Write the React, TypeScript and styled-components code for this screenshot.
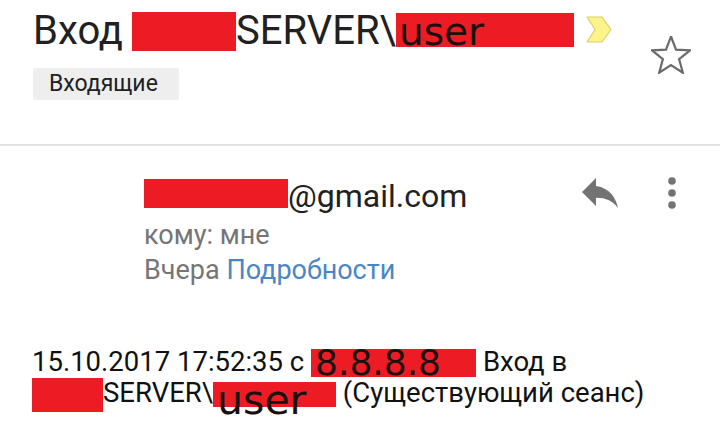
import React from "react";
import styled, { createGlobalStyle } from "styled-components";

const Global = createGlobalStyle`
  html, body { margin: 0; padding: 0; background: #ffffff; }
  * { box-sizing: border-box; }
`;

const Page = styled.div`
  width: 720px;
  height: 423px;
  overflow: hidden;
  background: #ffffff;
  font-family: Roboto, "Noto Sans", sans-serif;
  color: #212121;
`;

const Header = styled.header`
  height: 144px;
  display: flex;
  justify-content: space-between;
  padding: 0 29px 0 33px;
`;

const HeaderMain = styled.div`
  display: flex;
  flex-direction: column;
  align-items: flex-start;
`;

const TitleRow = styled.h1`
  margin: 0;
  height: 52px;
  display: flex;
  align-items: flex-start;
  font-size: 40px;
  font-weight: 400;
  line-height: 40px;
  white-space: nowrap;
`;

const TitleWord = styled.span<{ $top: number }>`
  margin-top: ${(p) => p.$top}px;
`;

const Redact = styled.span<{ $w: number; $h: number; $top?: number; $left?: number }>`
  display: inline-block;
  flex-shrink: 0;
  width: ${(p) => p.$w}px;
  height: ${(p) => p.$h}px;
  margin-top: ${(p) => p.$top ?? 0}px;
  margin-left: ${(p) => p.$left ?? 0}px;
  background: #ed1c24;
`;

/* A redaction whose red band is shorter than the handwritten text laid on it */
const RedactBand = styled.span<{ $w: number; $band: number; $top?: number }>`
  display: inline-block;
  flex-shrink: 0;
  width: ${(p) => p.$w}px;
  margin-top: ${(p) => p.$top ?? 0}px;
  background: linear-gradient(#ed1c24, #ed1c24) top left / 100% ${(p) => p.$band}px no-repeat;
`;

const RedactText = styled.span<{ $size: number; $lh: number; $pl: number }>`
  display: block;
  font-family: "DejaVu Sans", sans-serif;
  font-size: ${(p) => p.$size}px;
  line-height: ${(p) => p.$lh}px;
  color: #1a1010;
  padding-left: ${(p) => p.$pl}px;
  white-space: nowrap;
`;

const Marker = styled.svg`
  flex-shrink: 0;
  margin-top: 16px;
  margin-left: 12px;
`;

const Chip = styled.span`
  margin-top: 16px;
  width: 146px;
  height: 32px;
  padding-left: 16px;
  background: #eeeeee;
  border-radius: 2px;
  font-size: 23px;
  line-height: 32px;
  color: #212121;
`;

const StarButton = styled.svg`
  margin-top: 36px;
  flex-shrink: 0;
`;

const Divider = styled.hr`
  margin: 0;
  border: 0;
  height: 2px;
  background: #e2e2e2;
`;

const SenderSection = styled.section`
  height: 200px;
  display: flex;
  padding-left: 144px;
  padding-right: 44px;
`;

const SenderInfo = styled.div`
  display: flex;
  flex-direction: column;
  padding-top: 33px;
`;

const SenderRow = styled.div`
  display: flex;
  align-items: flex-start;
  height: 39px;
`;

const Email = styled.span`
  margin-top: 1px;
  font-size: 32px;
  line-height: 32px;
  color: #212121;
`;

const MetaLine = styled.div`
  font-size: 27px;
  line-height: 35px;
  color: #757575;
`;

const Link = styled.a`
  color: #4a86c5;
  text-decoration: none;
`;

const Actions = styled.div`
  margin-left: auto;
  display: flex;
  align-items: flex-start;
  gap: 44px;
`;

const ReplyIcon = styled.svg`
  margin-top: 22px;
`;

const MoreIcon = styled.svg`
  margin-top: 31px;
`;

const Body = styled.p`
  margin: 0;
  width: 645px;
  padding-left: 32px;
  font-size: 27.5px;
  line-height: 31px;
  color: #111111;
`;

const InlineRedact = styled.span<{ $w: number; $h: number; $band: number; $va: number }>`
  display: inline-block;
  width: ${(p) => p.$w}px;
  height: ${(p) => p.$h}px;
  vertical-align: ${(p) => p.$va}px;
  background: linear-gradient(#ed1c24, #ed1c24) top left / 100% ${(p) => p.$band}px no-repeat;
`;

const starPoints =
  "20,0.5 25,13.6 39,14.3 28.1,23.1 31.8,36.7 20,29 8.2,36.7 11.9,23.1 1,14.3 15,13.6";

export default function App() {
  return (
    <Page>
      <Global />
      <Header>
        <HeaderMain>
          <TitleRow>
            <TitleWord $top={11}>Вход</TitleWord>
            <Redact $w={104} $h={39} $top={12} $left={9} />
            <TitleWord $top={11}>SERVER\</TitleWord>
            <RedactBand $w={178} $band={34} $top={13}>
              <RedactText $size={39} $lh={38} $pl={3}>user</RedactText>
            </RedactBand>
            <Marker width="26" height="27" viewBox="0 0 26 27">
              <polygon
                points="1,1 16,1 25,13.5 16,26 1,26 9,13.5"
                fill="#fdf38b"
                stroke="#d9cf6a"
                strokeWidth="1.2"
                strokeLinejoin="round"
              />
            </Marker>
          </TitleRow>
          <Chip>Входящие</Chip>
        </HeaderMain>
        <StarButton width="40" height="38" viewBox="0 0 40 38">
          <polygon
            points={starPoints}
            fill="none"
            stroke="#6b6b6b"
            strokeWidth="2.2"
            strokeLinejoin="miter"
          />
        </StarButton>
      </Header>
      <Divider />
      <SenderSection>
        <SenderInfo>
          <SenderRow>
            <Redact $w={144} $h={29} />
            <Email>@gmail.com</Email>
          </SenderRow>
          <MetaLine>кому: мне</MetaLine>
          <MetaLine>
            Вчера <Link href="#">Подробности</Link>
          </MetaLine>
        </SenderInfo>
        <Actions>
          <ReplyIcon width="48" height="48" viewBox="0 0 24 24">
            <path
              d="M10 9V5l-7 7 7 7v-4.1c5 0 8.5 1.6 11 5.1-1-5-4-10-11-11z"
              fill="#737373"
            />
          </ReplyIcon>
          <MoreIcon width="8" height="32" viewBox="0 0 8 32">
            <circle cx="4" cy="4" r="3.8" fill="#737373" />
            <circle cx="4" cy="16" r="3.8" fill="#737373" />
            <circle cx="4" cy="28" r="3.8" fill="#737373" />
          </MoreIcon>
        </Actions>
      </SenderSection>
      <Body>
        15.10.2017 17:52:35 с{" "}
        <InlineRedact $w={165} $h={28} $band={28} $va={-4}>
          <RedactText $size={36} $lh={28} $pl={4}>8.8.8.8</RedactText>
        </InlineRedact>{" "}
        Вход в <InlineRedact $w={71} $h={34} $band={34} $va={-10} />
        SERVER\
        <InlineRedact $w={123} $h={36} $band={25} $va={-12}>
          <RedactText $size={41} $lh={36} $pl={4}>user</RedactText>
        </InlineRedact>{" "}
        (Существующий сеанс)
      </Body>
    </Page>
  );
}
